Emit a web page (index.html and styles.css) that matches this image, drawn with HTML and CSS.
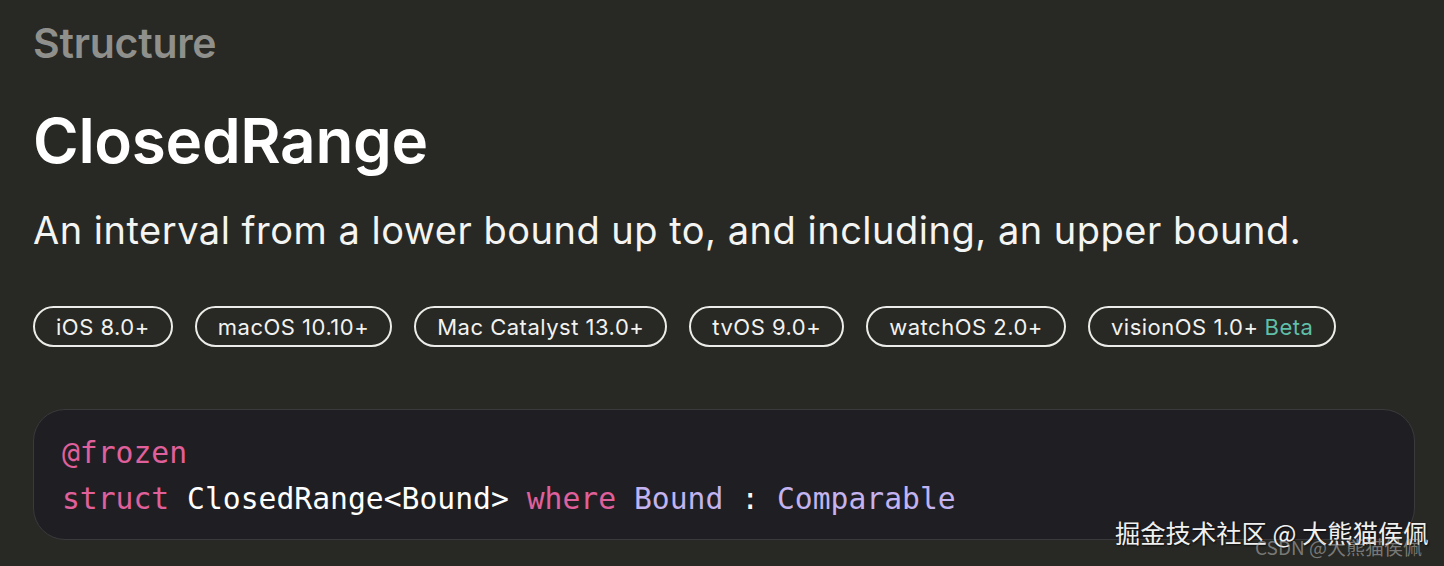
FILE: index.html
```html
<!DOCTYPE html>
<html lang="en">
<head>
<meta charset="utf-8">
<title>ClosedRange</title>
<link rel="stylesheet" href="styles.css">
</head>
<body>
<main class="page">
  <div class="eyebrow">Structure</div>
  <h1 class="title">ClosedRange</h1>
  <p class="abstract">An interval from a lower bound up to, and including, an upper bound.</p>
  <ul class="platforms">
    <li class="pill">iOS 8.0+</li>
    <li class="pill">macOS 10.10+</li>
    <li class="pill">Mac Catalyst 13.0+</li>
    <li class="pill">tvOS 9.0+</li>
    <li class="pill">watchOS 2.0+</li>
    <li class="pill">visionOS 1.0+ <span class="beta">Beta</span></li>
  </ul>
  <pre class="declaration"><code><span class="kw">@frozen</span>
<span class="kw">struct</span> ClosedRange&lt;Bound&gt; <span class="kw">where</span> <span class="ty">Bound</span> : <span class="ty">Comparable</span></code></pre>
</main>
<div class="watermark">
  <span class="wm-main">掘金技术社区 @ 大熊猫侯佩</span>
  <span class="wm-sub">CSDN @大熊猫侯佩</span>
</div>
</body>
</html>
```
FILE: styles.css
```css
html, body {
  margin: 0;
  padding: 0;
}
body {
  background: #282824;
  color: #ffffff;
  font-family: Inter, "Noto Sans", sans-serif;
  width: 1444px;
  height: 566px;
  overflow: hidden;
  position: relative;
}
.page {
  padding: 23px 29px 0 33px;
  display: flex;
  flex-direction: column;
  align-items: flex-start;
}
.eyebrow {
  font-size: 41px;
  line-height: 41px;
  font-weight: 600;
  color: #8f8f8b;
  letter-spacing: -0.25px;
}
.title {
  margin: 46px 0 0;
  font-size: 62px;
  line-height: 62px;
  font-weight: 600;
  letter-spacing: -0.3px;
}
.abstract {
  margin: 39px 0 0;
  font-size: 38px;
  line-height: 38px;
  font-weight: 400;
  color: #f4f4f2;
  letter-spacing: 0.5px;
}
.platforms {
  list-style: none;
  margin: 57px 0 0;
  padding: 0;
  display: flex;
  gap: 22px;
}
.pill {
  box-sizing: border-box;
  height: 41px;
  border: 2px solid #ececea;
  border-radius: 21px;
  padding: 0 21px;
  display: flex;
  align-items: center;
  font-size: 22px;
  letter-spacing: 0.5px;
  color: #f2f2f0;
}
.beta {
  color: #5fbfa8;
  margin-left: 6px;
}
.declaration {
  box-sizing: border-box;
  align-self: stretch;
  margin: 62px 0 0;
  height: 131px;
  padding: 20px 28px 0;
  background: #1f1f23;
  border: 1.5px solid #3a3a3d;
  border-radius: 32px;
  font-family: "DejaVu Sans Mono", "Liberation Mono", monospace;
  font-size: 29.7px;
  line-height: 46px;
  color: #ffffff;
}
.kw {
  color: #e0609c;
}
.ty {
  color: #c3b3f0;
}
.watermark {
  position: absolute;
  left: 1115px;
  top: 515px;
  width: 320px;
  height: 50px;
}
.wm-main {
  position: absolute;
  left: 0;
  top: 0;
  font-family: "Noto Sans CJK SC", sans-serif;
  font-size: 25.3px;
  line-height: 34px;
  color: #f0f0f0;
  text-shadow: 1px 1px 2px rgba(0, 0, 0, 0.7);
  white-space: nowrap;
}
.wm-sub {
  position: absolute;
  left: 140px;
  top: 20px;
  font-family: "Noto Sans CJK SC", sans-serif;
  font-size: 19px;
  line-height: 24px;
  color: rgba(190, 190, 190, 0.55);
  white-space: nowrap;
}
```
